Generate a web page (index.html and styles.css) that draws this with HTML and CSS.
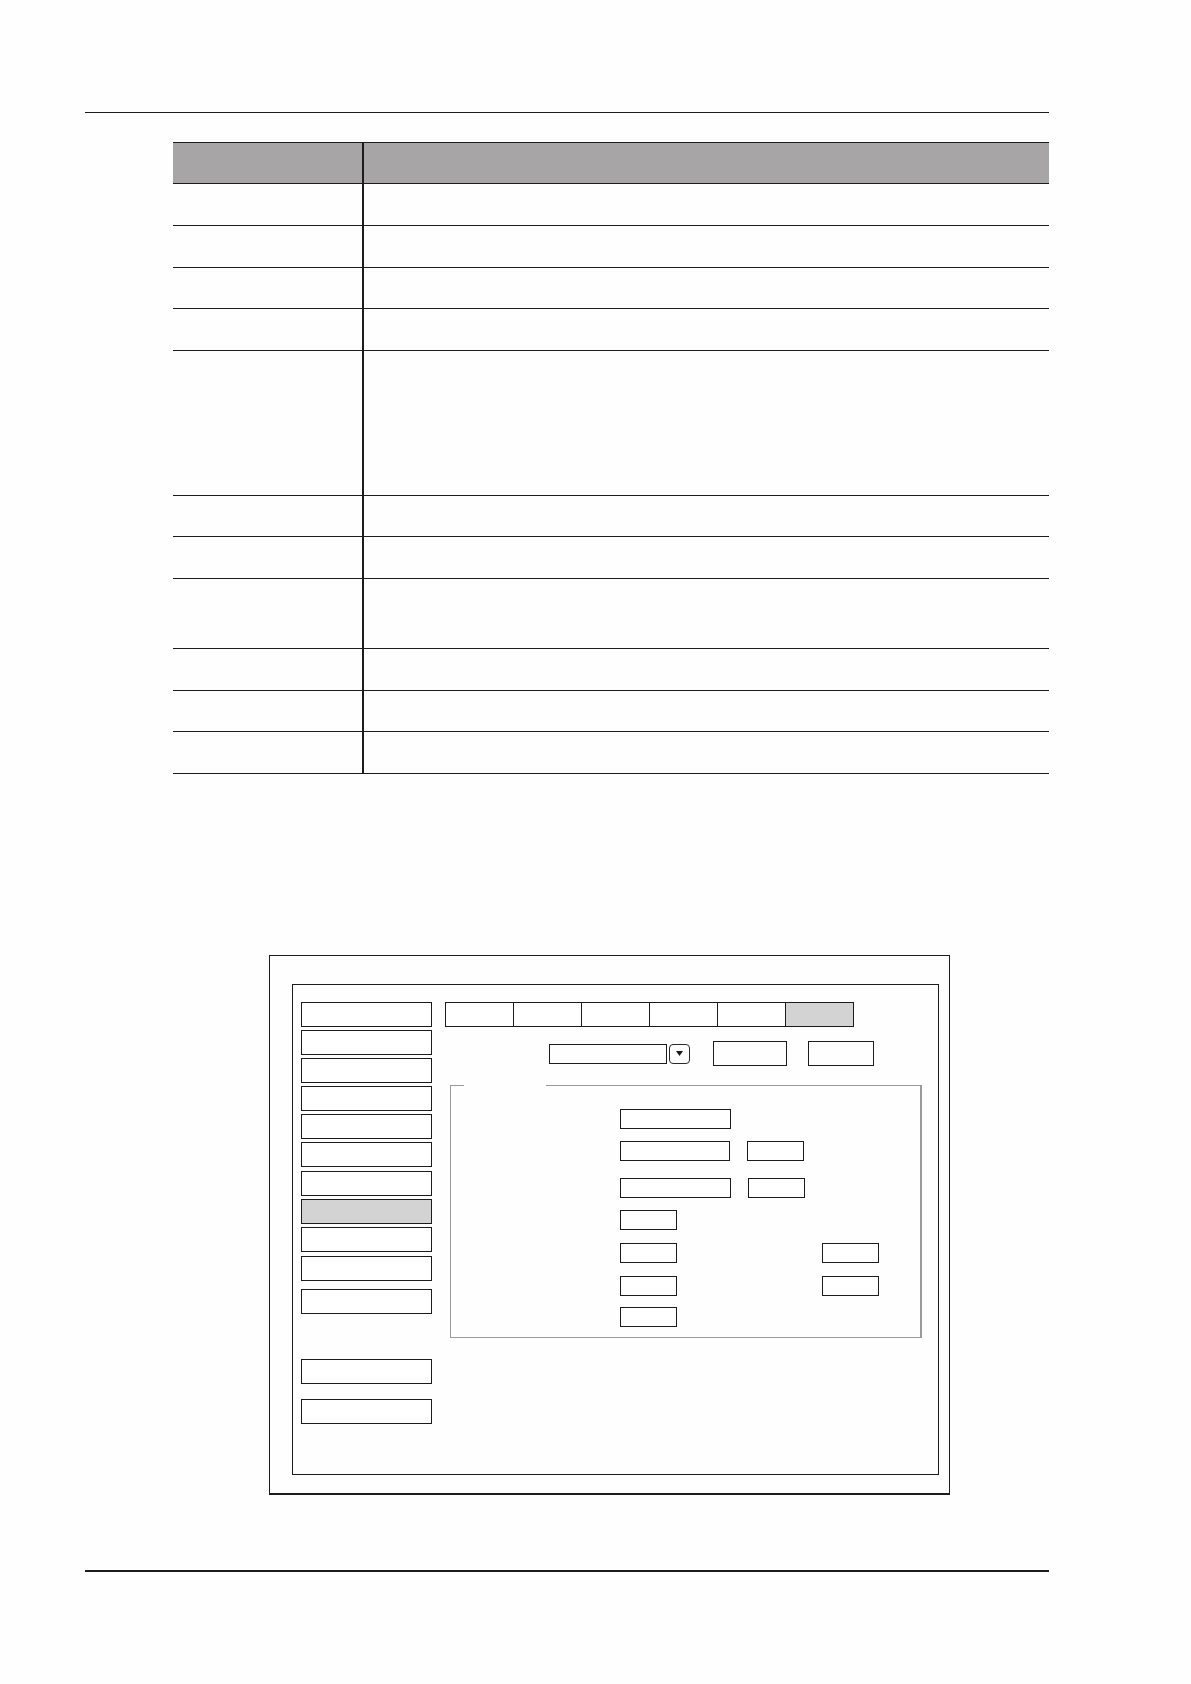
FILE: index.html
```html
<!DOCTYPE html>
<html lang="en">
<head>
<meta charset="utf-8">
<title>Settings screen</title>
<link rel="stylesheet" href="styles.css">
</head>
<body>
<div class="page">
  <div class="rule-top"></div>

  <div class="table">
    <div class="row head h41"><div class="c1"></div><div class="c2"></div></div>
    <div class="row h42"><div class="c1"></div><div class="c2"></div></div>
    <div class="row h42"><div class="c1"></div><div class="c2"></div></div>
    <div class="row h41"><div class="c1"></div><div class="c2"></div></div>
    <div class="row h42"><div class="c1"></div><div class="c2"></div></div>
    <div class="row h145"><div class="c1"></div><div class="c2"></div></div>
    <div class="row h41"><div class="c1"></div><div class="c2"></div></div>
    <div class="row h42"><div class="c1"></div><div class="c2"></div></div>
    <div class="row h70"><div class="c1"></div><div class="c2"></div></div>
    <div class="row h42"><div class="c1"></div><div class="c2"></div></div>
    <div class="row h41"><div class="c1"></div><div class="c2"></div></div>
    <div class="row h42"><div class="c1"></div><div class="c2"></div></div>
  </div>

  <div class="screen">
    <div class="panel">
      <div class="side">
        <div class="sbtn"></div>
        <div class="sbtn"></div>
        <div class="sbtn"></div>
        <div class="sbtn"></div>
        <div class="sbtn"></div>
        <div class="sbtn"></div>
        <div class="sbtn sp1"></div>
        <div class="sbtn sel"></div>
        <div class="sbtn"></div>
        <div class="sbtn sp1"></div>
        <div class="sbtn sp8"></div>
        <div class="sbtn sp45"></div>
        <div class="sbtn sp15"></div>
      </div>
      <div class="main">
        <div class="tabs">
          <div class="tab"></div>
          <div class="tab"></div>
          <div class="tab"></div>
          <div class="tab"></div>
          <div class="tab"></div>
          <div class="tab active"></div>
        </div>
        <div class="toolbar">
          <div class="select"></div>
          <div class="arrow">
            <svg width="9" height="7" viewBox="0 0 9 7"><polygon points="1,1 8,1 4.5,6" fill="#1a1a1a"/></svg>
          </div>
          <div class="tbtn wide"></div>
          <div class="tbtn narrow"></div>
        </div>
        <div class="group">
          <div class="group-top">
            <span class="seg seg-a"></span>
            <span class="seg-gap"></span>
            <span class="seg seg-b"></span>
          </div>
          <div class="fields">
            <div class="frow"><div class="field long"></div></div>
            <div class="frow g12"><div class="field long2"></div><div class="field short near"></div></div>
            <div class="frow g17"><div class="field long"></div><div class="field short near"></div></div>
            <div class="frow g12"><div class="field short"></div></div>
            <div class="frow g13"><div class="field short"></div><div class="field short far"></div></div>
            <div class="frow g13"><div class="field short"></div><div class="field short far"></div></div>
            <div class="frow g11"><div class="field short"></div></div>
          </div>
        </div>
      </div>
    </div>
  </div>

  <div class="rule-bottom"></div>
</div>
</body>
</html>
```

FILE: styles.css
```css
* { box-sizing: border-box; }

html, body {
  margin: 0;
  padding: 0;
  background: #fefefe;
  font-family: "Liberation Sans", Arial, sans-serif;
}

.page {
  width: 964px;
  margin-left: 85px;
  padding-top: 112px;
  padding-bottom: 100px;
}

.rule-top {
  height: 1px;
  background: #1c1c1c;
}

/* ---------- table ---------- */
.table {
  margin-top: 29px;
  margin-left: 88px;
  width: 876px;
  border-top: 1px solid #1c1c1c;
}

.row {
  display: flex;
  border-bottom: 1px solid #1c1c1c;
}

.row.head {
  background: #a7a5a6;
  border-bottom: 1px solid #1c1c1c;
}

.c1 {
  width: 191px;
  border-right: 2px solid #1c1c1c;
}

.c2 { flex: 1; }

.h41 { height: 41px; }
.h42 { height: 42px; }
.h70 { height: 70px; }
.h145 { height: 145px; }

/* ---------- screen mock ---------- */
.screen {
  margin-top: 181px;
  margin-left: 184px;
  width: 681px;
  height: 540px;
  border: 1px solid #1c1c1c;
  border-bottom-width: 2px;
  padding: 28px 11px 19px 22px;
}

.panel {
  width: 647px;
  height: 491px;
  border: 1px solid #1c1c1c;
  display: flex;
  align-items: flex-start;
  padding: 17px 0 0 8px;
}

.side {
  display: flex;
  flex-direction: column;
  gap: 3px;
  width: 131px;
}

.sbtn {
  height: 25px;
  border: 1px solid #1c1c1c;
  background: #fff;
}

.sbtn.sel { background: #d3d3d3; }
.sbtn.sp1 { margin-top: 1px; }
.sbtn.sp8 { margin-top: 5px; }
.sbtn.sp45 { margin-top: 42px; }
.sbtn.sp15 { margin-top: 12px; }

.main {
  margin-left: 13px;
  display: flex;
  flex-direction: column;
}

.tabs {
  display: flex;
}

.tab {
  width: 69px;
  height: 25px;
  border: 1px solid #1c1c1c;
  background: #fff;
}

.tab + .tab { margin-left: -1px; }

.tab.active { background: #d3d3d3; }

.toolbar {
  margin-top: 14px;
  height: 25px;
  display: flex;
  align-items: center;
}

.select {
  margin-left: 104px;
  width: 118px;
  height: 20px;
  border: 1px solid #1c1c1c;
}

.arrow {
  margin-left: 2px;
  width: 21px;
  height: 20px;
  border: 1px solid #2a2a2a;
  border-radius: 4px;
  display: flex;
  align-items: center;
  justify-content: center;
}

.arrow svg { display: block; }

.tbtn {
  height: 25px;
  border: 1px solid #1c1c1c;
}

.tbtn.wide { margin-left: 23px; width: 74px; }
.tbtn.narrow { margin-left: 21px; width: 66px; }

.group {
  margin-top: 19px;
  margin-left: 5px;
  width: 472px;
  height: 253px;
  border-left: 1px solid #9a9a9a;
  border-right: 2px solid #9a9a9a;
  border-bottom: 1px solid #9a9a9a;
}

.group-top {
  display: flex;
  height: 1px;
}

.seg { height: 1px; background: #9a9a9a; }
.seg-a { width: 13px; }
.seg-gap { width: 82px; }
.seg-b { flex: 1; }

.fields {
  padding: 23px 0 0 169px;
  display: flex;
  flex-direction: column;
}

.frow {
  display: flex;
  height: 20px;
}

.g11 { margin-top: 11px; }
.g12 { margin-top: 12px; }
.g13 { margin-top: 13px; }
.g17 { margin-top: 17px; }

.field {
  height: 20px;
  border: 1px solid #1c1c1c;
  background: #fff;
}

.field.long { width: 111px; }
.field.long2 { width: 110px; }
.field.short { width: 57px; }
.field.near { margin-left: 17px; }
.field.far { margin-left: 145px; }

.rule-bottom {
  margin-top: 75px;
  height: 2px;
  background: #1c1c1c;
}
```
